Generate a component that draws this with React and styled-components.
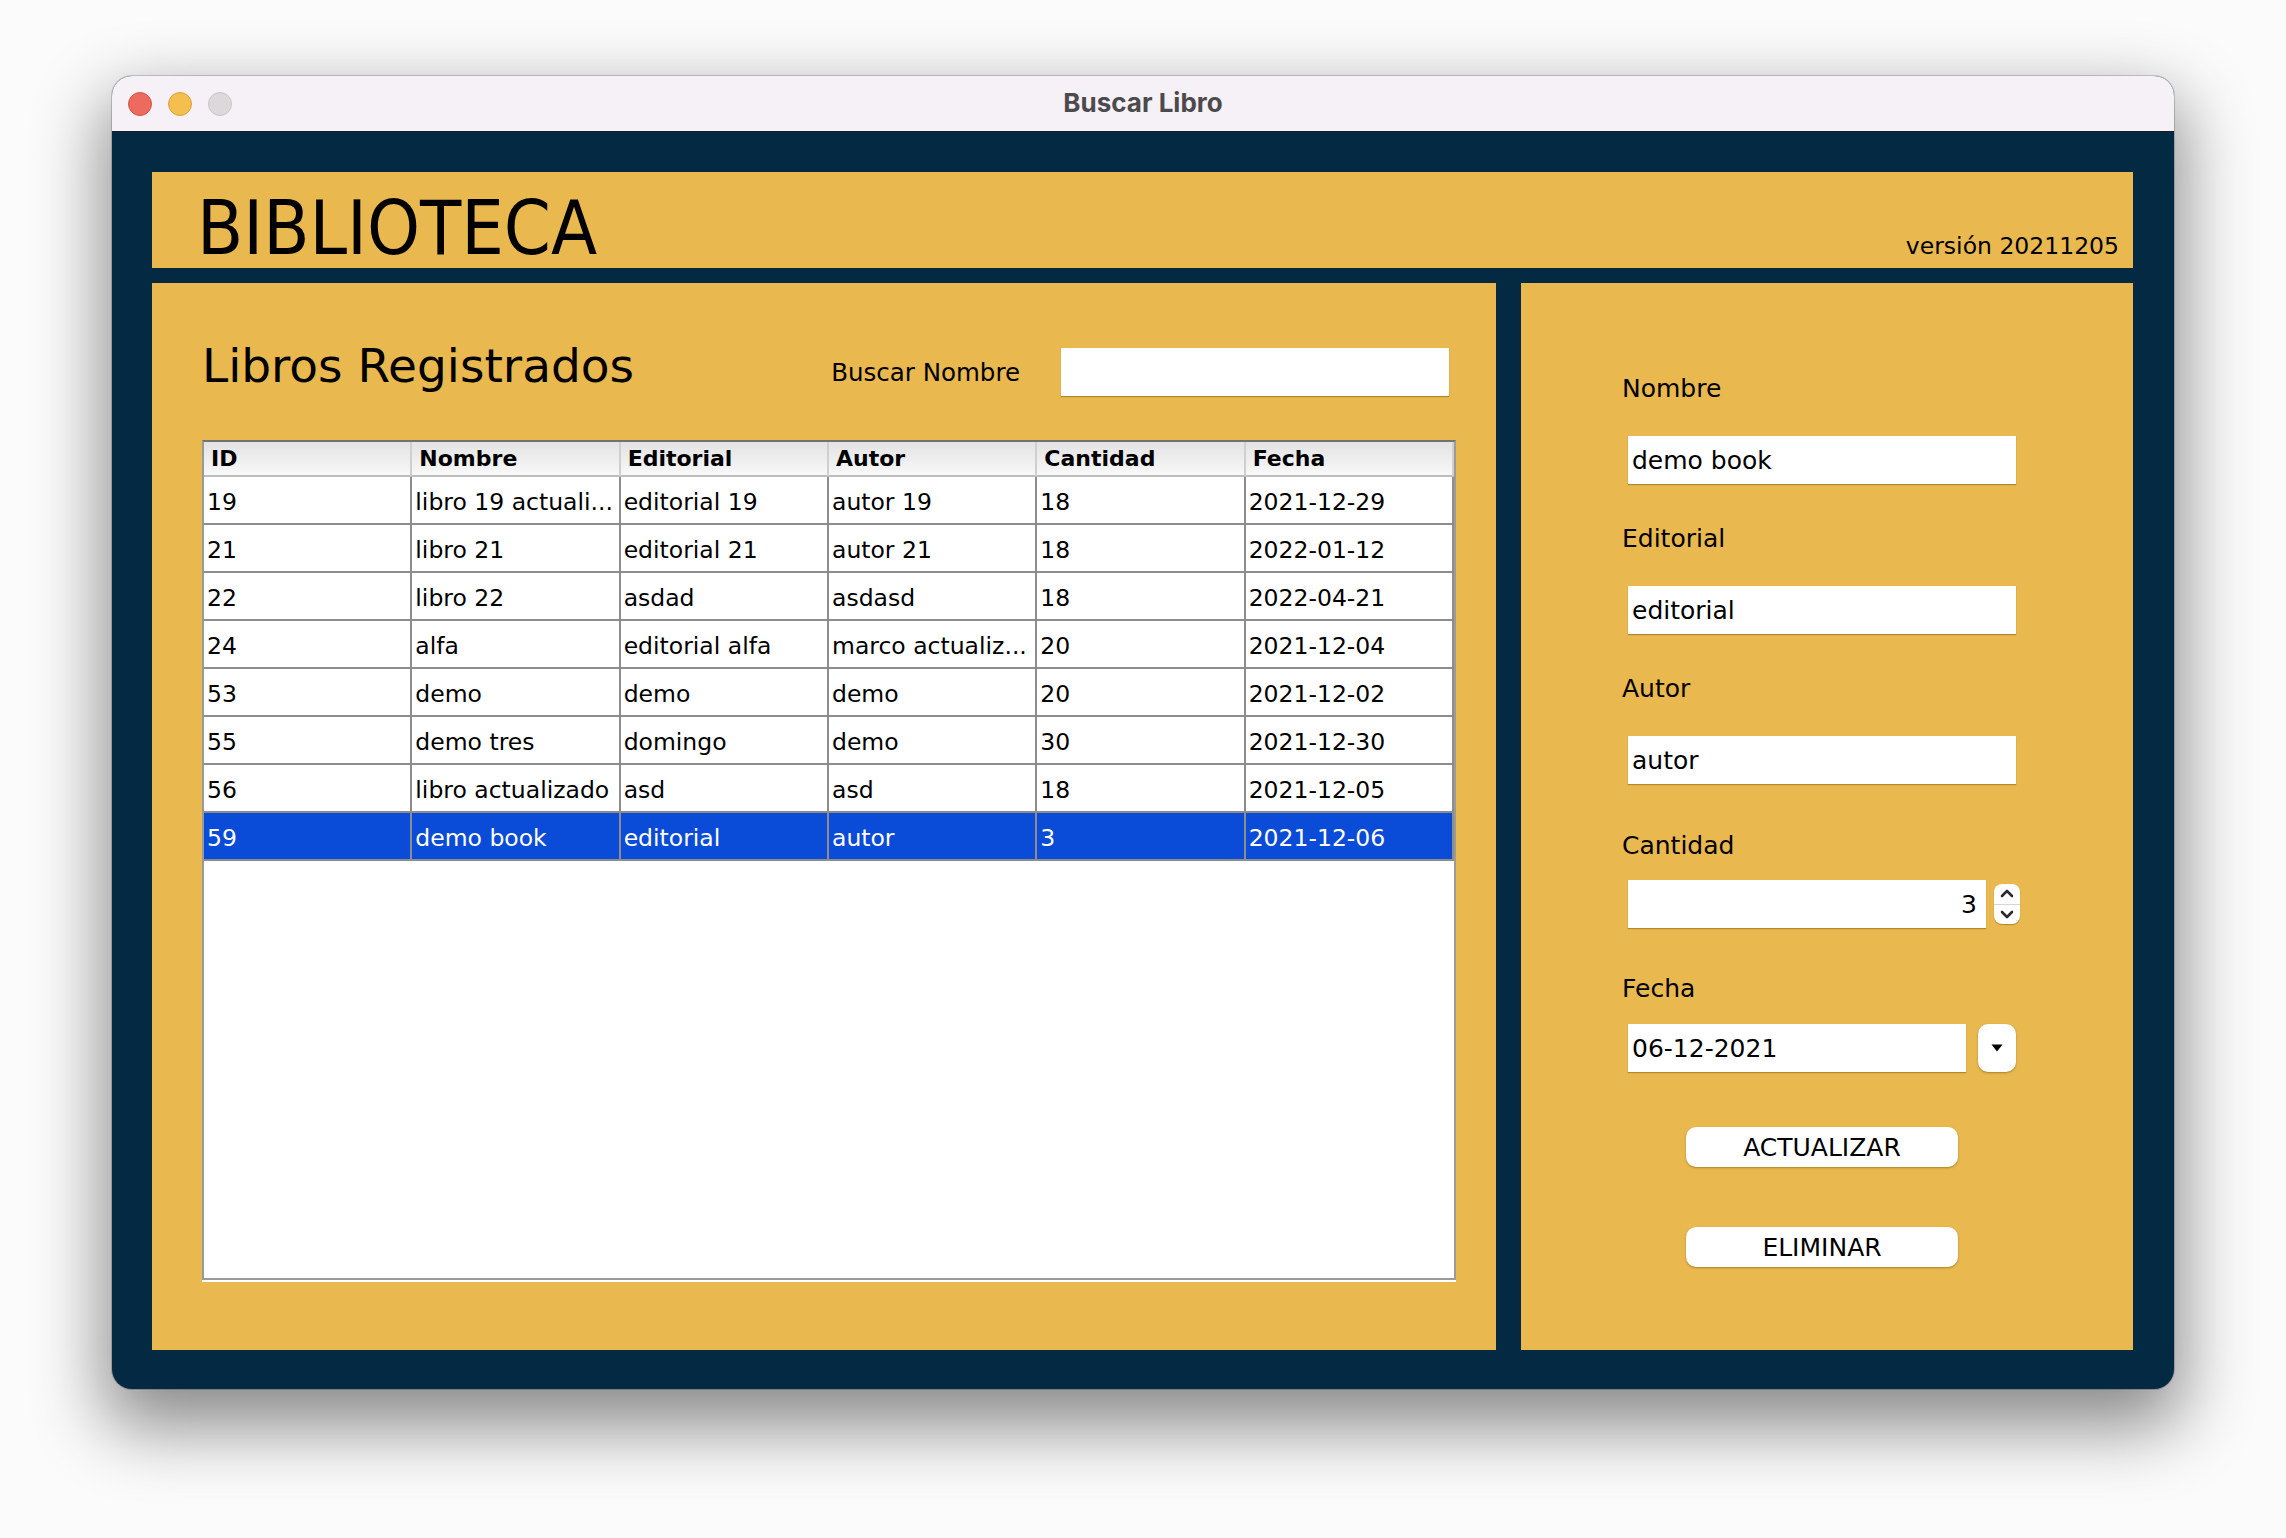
import React from "react"
import styled, { createGlobalStyle } from "styled-components"

const NAVY = "#042a43"
const GOLD = "#e9b84f"
const SELECTED = "#0a4bd8"
const GRID = "#8d8d8d"
const UI_FONT = `"DejaVu Sans", "Liberation Sans", sans-serif`

const GlobalStyle = createGlobalStyle`
    html, body {
        margin: 0;
        padding: 0;
        background: #fbfbfb;
    }
    body {
        font-family: ${ UI_FONT };
        color: #000;
    }
    * {
        box-sizing: border-box;
    }
`

const columns = ["ID", "Nombre", "Editorial", "Autor", "Cantidad", "Fecha"]

const books = [
    ["19", "libro 19 actuali...", "editorial 19", "autor 19", "18", "2021-12-29"],
    ["21", "libro 21", "editorial 21", "autor 21", "18", "2022-01-12"],
    ["22", "libro 22", "asdad", "asdasd", "18", "2022-04-21"],
    ["24", "alfa", "editorial alfa", "marco actualiz...", "20", "2021-12-04"],
    ["53", "demo", "demo", "demo", "20", "2021-12-02"],
    ["55", "demo tres", "domingo", "demo", "30", "2021-12-30"],
    ["56", "libro actualizado", "asd", "asd", "18", "2021-12-05"],
    ["59", "demo book", "editorial", "autor", "3", "2021-12-06"],
]

export default class App extends React.Component {
    render() {
        return (
            <Page>
                <GlobalStyle />
                <Window>
                    <TitleBar>
                        <Lights>
                            <Light color="#ed6a5e" edge="#d4564a" />
                            <Light color="#f4bf4f" edge="#d9a33d" />
                            <Light color="#dcd8dc" edge="#c8c3c8" />
                        </Lights>
                        <WindowTitle>Buscar Libro</WindowTitle>
                        <span />
                    </TitleBar>
                    <Content>
                        <Header>
                            <Brand>BIBLIOTECA</Brand>
                            <Version>versión 20211205</Version>
                        </Header>
                        <ListPanel>
                            <TitleRow>
                                <PanelTitle>Libros Registrados</PanelTitle>
                                <SearchLabel>Buscar Nombre</SearchLabel>
                                <SearchInput readOnly value="" />
                            </TitleRow>
                            <BookTable rows={ books } selected={ 7 } />
                        </ListPanel>
                        <FormPanel>
                            <FieldLabel>Nombre</FieldLabel>
                            <TextBox readOnly value="demo book" />
                            <FieldLabel top={ 40 }>Editorial</FieldLabel>
                            <TextBox readOnly value="editorial" />
                            <FieldLabel top={ 40 }>Autor</FieldLabel>
                            <TextBox readOnly value="autor" />
                            <FieldLabel top={ 47 }>Cantidad</FieldLabel>
                            <Spinner value="3" />
                            <FieldLabel top={ 46 }>Fecha</FieldLabel>
                            <DatePicker value="06-12-2021" />
                            <ActionButton top={ 55 }>ACTUALIZAR</ActionButton>
                            <ActionButton top={ 60 }>ELIMINAR</ActionButton>
                        </FormPanel>
                    </Content>
                </Window>
            </Page>
        )
    }
}

const BookTable = ({ rows, selected }) => (
    <TableScroll>
        <TableHead>
            { columns.map(c => <HeadCell key={ c }>{ c }</HeadCell>) }
        </TableHead>
        { rows.map((row, i) => (
            <TableRow key={ row[0] } selected={ i === selected }>
                { row.map((v, j) => <Cell key={ j }>{ v }</Cell>) }
            </TableRow>
        )) }
    </TableScroll>
)

const Spinner = ({ value }) => (
    <SpinnerRow>
        <NumberBox readOnly value={ value } />
        <Arrows>
            <ArrowHalf>
                <svg width="14" height="9" viewBox="0 0 14 9">
                    <path d="M2 7 L7 2 L12 7" fill="none" stroke="#2b2b2b" strokeWidth="2.6" strokeLinecap="round" strokeLinejoin="round" />
                </svg>
            </ArrowHalf>
            <ArrowHalf bottom>
                <svg width="14" height="9" viewBox="0 0 14 9">
                    <path d="M2 2 L7 7 L12 2" fill="none" stroke="#2b2b2b" strokeWidth="2.6" strokeLinecap="round" strokeLinejoin="round" />
                </svg>
            </ArrowHalf>
        </Arrows>
    </SpinnerRow>
)

const DatePicker = ({ value }) => (
    <DateRow>
        <DateBox readOnly value={ value } />
        <DropButton>
            <svg width="12" height="8" viewBox="0 0 12 8">
                <path d="M0.5 0.5 H11.5 L6 7.5 Z" fill="#000" />
            </svg>
        </DropButton>
    </DateRow>
)

const Page = styled.div`
    width: 2286px;
    height: 1538px;
    padding: 76px 112px 0;
`
const Window = styled.div`
    width: 2062px;
    height: 1313px;
    border-radius: 20px;
    overflow: hidden;
    background: ${ NAVY };
    box-shadow: 0 0 0 1px rgba(0, 0, 0, 0.18), 0 30px 70px 8px rgba(0, 0, 0, 0.45);
    display: flex;
    flex-direction: column;
`
const TitleBar = styled.div`
    height: 56px;
    flex: none;
    background: #f6f1f7;
    border-bottom: 1px solid #1d1d1f;
    display: grid;
    grid-template-columns: 1fr auto 1fr;
    align-items: center;
`
const Lights = styled.div`
    display: flex;
    gap: 16px;
    padding-left: 16px;
`
const Light = styled.span`
    width: 24px;
    height: 24px;
    border-radius: 50%;
    background: ${ ({ color }) => color };
    border: 1px solid ${ ({ edge }) => edge };
`
const WindowTitle = styled.div`
    font-family: Inter, "Liberation Sans", sans-serif;
    font-weight: 700;
    font-size: 26px;
    color: #4c4a4c;
    padding-bottom: 2px;
`
const Content = styled.div`
    flex: 1;
    padding: 40px 41px 39px 40px;
    display: grid;
    grid-template-columns: 1344px 612px;
    grid-template-rows: 96px 1067px;
    column-gap: 25px;
    row-gap: 15px;
`
const Header = styled.header`
    grid-column: 1 / 3;
    background: ${ GOLD };
    display: flex;
    justify-content: space-between;
    align-items: baseline;
    padding: 19px 14px 0 45px;
`
const Brand = styled.h1`
    margin: 0;
    font-family: "DejaVu Sans Condensed", "DejaVu Sans", sans-serif;
    font-stretch: condensed;
    font-weight: 400;
    font-size: 75px;
    line-height: 75px;
`
const Version = styled.span`
    font-size: 23.5px;
`
const ListPanel = styled.section`
    background: ${ GOLD };
    padding: 59px 40px 0 50px;
`
const TitleRow = styled.div`
    display: flex;
    align-items: flex-start;
    height: 54px;
    padding-right: 7px;
`
const PanelTitle = styled.h2`
    margin: 0;
    font-weight: 400;
    font-size: 47px;
    line-height: 47px;
    flex: 1;
`
const SearchLabel = styled.span`
    font-size: 24.5px;
    line-height: 24.5px;
    margin-top: 19px;
    margin-right: 41px;
`
const SearchInput = styled.input`
    width: 388px;
    height: 48px;
    margin-top: 6px;
    border: none;
    outline: none;
    background: #fff;
    box-shadow: 0 1px 1px rgba(110, 75, 0, 0.45);
`
const TableScroll = styled.div`
    margin-top: 44px;
    height: 840px;
    background: #fff;
    border: 2px solid #9a9a9a;
    border-top-color: #727272;
    box-shadow: 0 2px 0 #fff;
`
const TableHead = styled.div`
    display: grid;
    grid-template-columns: repeat(6, 1fr);
    height: 35px;
    background: linear-gradient(#e3e3e3, #f8f8f8);
    border-bottom: 2px solid #bdbdbd;
`
const HeadCell = styled.div`
    font-weight: 700;
    font-size: 22px;
    line-height: 34px;
    padding-left: 7px;
    border-right: 2px solid #cfcfcf;
`
const TableRow = styled.div`
    display: grid;
    grid-template-columns: repeat(6, 1fr);
    height: 48px;
    border-bottom: 2px solid ${ GRID };
    background: ${ ({ selected }) => selected ? SELECTED : "#fff" };
    color: ${ ({ selected }) => selected ? "#fff" : "#000" };
`
const Cell = styled.div`
    font-size: 23.5px;
    line-height: 46px;
    padding: 2px 0 0 3px;
    border-right: 2px solid ${ GRID };
    white-space: nowrap;
    overflow: hidden;
`
const FormPanel = styled.section`
    background: ${ GOLD };
    padding: 91px 0 0 101px;
    display: flex;
    flex-direction: column;
    align-items: flex-start;
`
const FieldLabel = styled.label`
    font-size: 25px;
    line-height: 30px;
    margin-top: ${ ({ top }) => top || 0 }px;
`
const boxStyle = `
    height: 48px;
    border: none;
    outline: none;
    background: #fff;
    font-family: ${ UI_FONT };
    font-size: 25px;
    color: #000;
    box-shadow: 0 1px 1px rgba(110, 75, 0, 0.45);
`
const TextBox = styled.input`
    ${ boxStyle }
    width: 388px;
    margin: 32px 0 0 6px;
    padding: 0 4px;
`
const SpinnerRow = styled.div`
    display: flex;
    align-items: center;
    gap: 8px;
    margin: 19px 0 0 6px;
`
const NumberBox = styled.input`
    ${ boxStyle }
    width: 358px;
    text-align: right;
    padding: 0 9px 0 5px;
`
const Arrows = styled.div`
    width: 26px;
    height: 40px;
    border-radius: 8px;
    background: #fff;
    box-shadow: 0 1px 1px rgba(110, 75, 0, 0.45);
    display: flex;
    flex-direction: column;
    overflow: hidden;
`
const ArrowHalf = styled.div`
    flex: 1;
    display: flex;
    align-items: center;
    justify-content: center;
    border-top: ${ ({ bottom }) => bottom ? "1px solid #d6d6d6" : "none" };
`
const DateRow = styled.div`
    display: flex;
    gap: 12px;
    margin: 20px 0 0 6px;
`
const DateBox = styled.input`
    ${ boxStyle }
    width: 338px;
    padding: 0 4px;
`
const DropButton = styled.div`
    width: 38px;
    height: 48px;
    border-radius: 10px;
    background: #fff;
    box-shadow: 0 1px 2px rgba(110, 75, 0, 0.5);
    display: flex;
    align-items: center;
    justify-content: center;
`
const ActionButton = styled.button`
    width: 272px;
    height: 40px;
    margin: ${ ({ top }) => top }px 0 0 64px;
    border: none;
    border-radius: 10px;
    background: #fff;
    font-family: ${ UI_FONT };
    font-size: 25px;
    color: #000;
    padding: 0;
    box-shadow: 0 1px 2px rgba(110, 75, 0, 0.5);
`
